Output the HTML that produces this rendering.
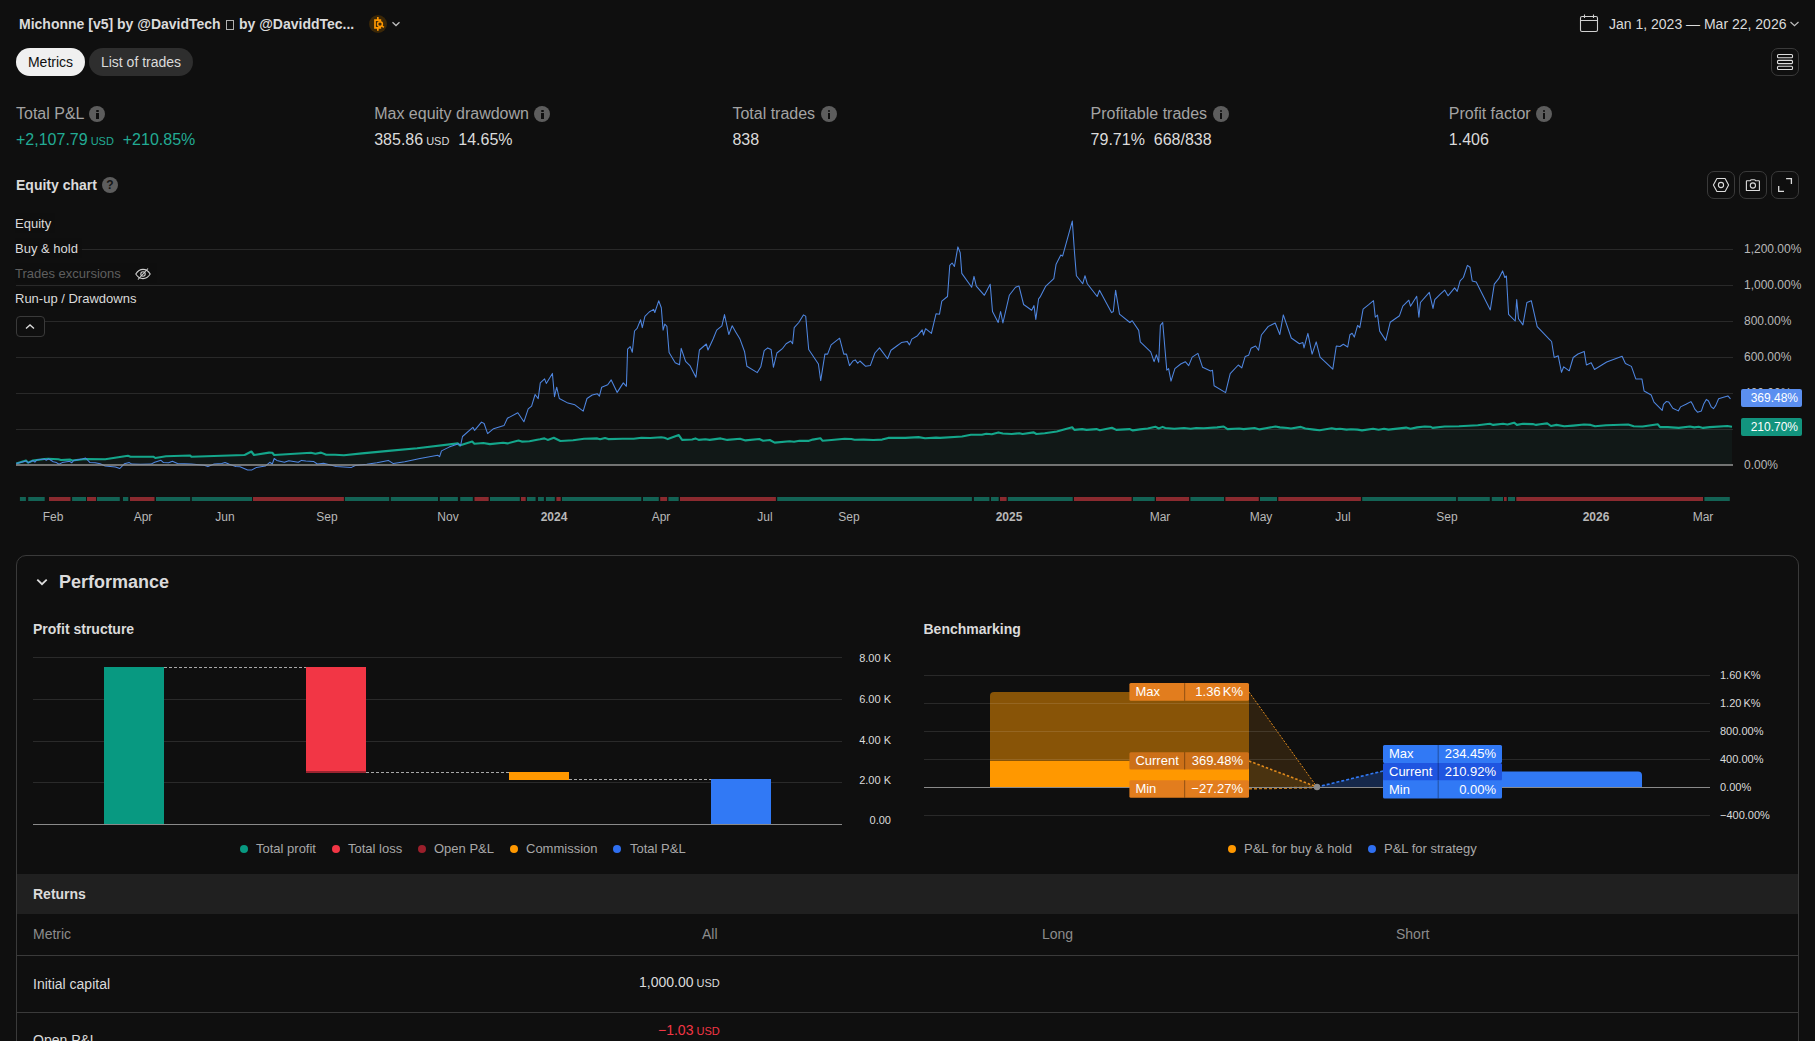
<!DOCTYPE html>
<html><head><meta charset="utf-8">
<style>
*{box-sizing:border-box;margin:0;padding:0}
html,body{width:1815px;height:1041px;overflow:hidden;background:#0f0f0f;font-family:"Liberation Sans",sans-serif;color:#dbdbdb}
.a{position:absolute;white-space:nowrap}
.title{left:19px;top:16px;font-size:14px;font-weight:bold;color:#dbdbdb}
.pill{height:28px;border-radius:14px;font-size:14px;line-height:28px;text-align:center}
.ml{font-size:16px;color:#a3a3a3}
.mv{font-size:16px;color:#dbdbdb}
.usd{font-size:11px;margin-left:3px}
.info{display:inline-block;width:16px;height:16px;border-radius:50%;background:#5d5d5d;vertical-align:-3px;position:relative;margin-left:1px}
.info:before{content:"";position:absolute;left:7px;top:3.5px;width:2.2px;height:2.2px;background:#0f0f0f;border-radius:1px}
.info:after{content:"";position:absolute;left:7px;top:7px;width:2.2px;height:5.5px;background:#0f0f0f}
.ibtn{width:28px;height:28px;border:1px solid #3a3a3a;border-radius:7px}
.leg{font-size:13px;color:#dbdbdb;background:rgba(15,15,15,0.88);padding:3px 4px 4px 0;height:20px}
.xl{font-size:12px;color:#b8b8b8;top:510px;transform:translateX(-50%)}
.yl{font-size:12px;color:#b8b8b8;left:1744px}
.card{left:16px;top:555px;width:1783px;height:600px;border:1px solid #3a3a3a;border-radius:10px}
.h2{font-size:14px;font-weight:bold;color:#dbdbdb}
.lg{font-size:13px;color:#a8a8a8;top:841px}
.dot{width:8px;height:8px;border-radius:50%;top:845px}
.pl{font-size:11px;color:#dbdbdb;text-align:right}
.bt{font-size:13px;color:#fff;height:17.5px;line-height:18px;padding-left:6px}
.th{font-size:14px;color:#8c8c8c;top:926px}
</style></head><body>

<!-- header -->
<div class="a title">Michonne [v5] by @DavidTech <span style="display:inline-block;width:7.5px;height:9.5px;border:1px solid #b0b0b0;vertical-align:-0.5px;margin:0 1.5px 0 1.5px"></span> by @DaviddTec...</div>
<svg class="a" style="left:369px;top:15px" width="36" height="18" viewBox="0 0 36 18"><circle cx="9" cy="9" r="9" fill="#3a2708"/><path d="M12.2 5.1H6V12.8H12.2M8.85 2.1V5.1M8.85 12.8V15.8" stroke="#ff9800" stroke-width="1.7" fill="none"/><circle cx="11" cy="9.1" r="2.4" fill="#3a2708" stroke="#ff9800" stroke-width="1.5"/><path d="M12.9 10.9l1.9 1.5" stroke="#ff9800" stroke-width="1.6"/><path d="M23.5 7.3l3.5 3.2 3.5-3.2" stroke="#bdbdbd" stroke-width="1.3" fill="none"/></svg>

<div class="a pill" style="left:16px;top:48px;width:69px;background:#f0f0f0;color:#0f0f0f">Metrics</div>
<div class="a pill" style="left:89px;top:48px;width:104px;background:#2e2e2e;color:#dbdbdb">List of trades</div>

<svg class="a" style="left:1579px;top:13px" width="20" height="20" viewBox="0 0 20 20"><rect x="1.5" y="3.5" width="17" height="15" rx="1.5" fill="none" stroke="#d0d0d0" stroke-width="1.1"/><path d="M1.5 7.5h17M5.5 1.5v3.5M14.5 1.5v3.5" stroke="#d0d0d0" stroke-width="1.1"/></svg>
<div class="a" style="left:1609px;top:16px;font-size:14px;color:#dbdbdb">Jan 1, 2023 — Mar 22, 2026</div>
<svg class="a" style="left:1789px;top:19px" width="11" height="10" viewBox="0 0 11 10"><path d="M1.5 3l4 3.7 4-3.7" stroke="#bdbdbd" stroke-width="1.2" fill="none"/></svg>

<div class="a ibtn" style="left:1771px;top:48px"></div>
<svg class="a" style="left:1771px;top:48px" width="28" height="28" viewBox="0 0 28 28"><rect x="6.5" y="6.5" width="15" height="3.2" rx="1" fill="none" stroke="#dcdcdc" stroke-width="1.1"/><rect x="6.5" y="12.4" width="15" height="3.2" rx="1" fill="none" stroke="#dcdcdc" stroke-width="1.1"/><rect x="6.5" y="18.3" width="15" height="3.2" rx="1" fill="none" stroke="#dcdcdc" stroke-width="1.1"/></svg>

<!-- metrics -->
<div class="a ml" style="left:16px;top:105px">Total P&amp;L <span class="info"></span></div>
<div class="a mv" style="left:16px;top:131px;color:#22ab94">+2,107.79<span class="usd">USD</span>&nbsp;&nbsp;+210.85%</div>
<div class="a ml" style="left:374.2px;top:105px">Max equity drawdown <span class="info"></span></div>
<div class="a mv" style="left:374.2px;top:131px">385.86<span class="usd">USD</span>&nbsp;&nbsp;14.65%</div>
<div class="a ml" style="left:732.4px;top:105px">Total trades <span class="info"></span></div>
<div class="a mv" style="left:732.4px;top:131px">838</div>
<div class="a ml" style="left:1090.6px;top:105px">Profitable trades <span class="info"></span></div>
<div class="a mv" style="left:1090.6px;top:131px">79.71%&nbsp;&nbsp;668/838</div>
<div class="a ml" style="left:1448.8px;top:105px">Profit factor <span class="info"></span></div>
<div class="a mv" style="left:1448.8px;top:131px">1.406</div>

<div class="a" style="left:16px;top:177px;font-size:14px;font-weight:bold">Equity chart</div>
<div class="a" style="left:102px;top:177px;width:16px;height:16px;border-radius:50%;background:#5d5d5d;color:#151515;font-size:12px;font-weight:bold;text-align:center;line-height:16px">?</div>

<div class="a ibtn" style="left:1707px;top:171px"></div>
<div class="a ibtn" style="left:1739px;top:171px"></div>
<div class="a ibtn" style="left:1771px;top:171px"></div>
<svg class="a" style="left:1707px;top:171px" width="92" height="28" viewBox="0 0 92 28">
<path d="M9.9 7.5h8.2L21.6 14l-3.5 6.5H9.9L6.4 14z" fill="none" stroke="#dcdcdc" stroke-width="1.1" stroke-linejoin="round"/><circle cx="14" cy="14" r="2.6" fill="none" stroke="#dcdcdc" stroke-width="1.1"/>
<path d="M39.4 10.2a0.5 0.5 0 0 1 .5-.5h3.3c.3-.6.9-.9 1.5-.9h2.4c.6 0 1.2.3 1.5.9h3.3a0.5 0.5 0 0 1 .5.5v9.3H39.4z" fill="none" stroke="#dcdcdc" stroke-width="1.1" stroke-linejoin="round"/><circle cx="45.9" cy="14.5" r="2.6" fill="none" stroke="#dcdcdc" stroke-width="1.1"/>
<path d="M79.1 7.7h5.3v5.3M71.7 15v5.3H77" fill="none" stroke="#dcdcdc" stroke-width="1.3"/>
</svg>

<svg class="a" style="left:0;top:0" width="1815" height="540" viewBox="0 0 1815 540">
<polygon points="16.3,465.0 16.3,463.4 26.0,460.5 28.0,462.6 33.0,460.5 44.4,459.0 48.2,458.8 58.4,459.3 60.9,460.0 69.8,459.6 72.3,460.5 85.0,459.0 105.2,459.3 128.0,455.8 130.5,456.7 153.4,456.7 155.3,458.0 166.0,456.2 190.2,455.5 191.4,456.7 244.0,455.0 245.1,454.7 251.4,451.5 254.0,455.0 269.1,452.6 272.3,452.8 274.2,455.0 311.0,452.8 315.4,453.8 321.1,452.6 326.2,454.7 335.0,454.7 343.9,455.3 362.0,453.4 388.5,450.9 417.1,448.2 457.9,443.4 459.6,445.4 472.2,441.6 474.4,443.8 483.3,443.0 489.9,444.1 503.1,442.7 507.5,443.4 518.5,440.5 521.8,441.6 529.5,441.2 537.2,439.7 540.0,439.3 544.4,438.4 547.7,439.9 553.8,437.7 560.4,441.0 573.1,440.2 584.1,438.8 597.3,438.4 600.1,439.3 605.0,438.0 608.3,439.1 622.6,438.8 633.7,438.8 641.4,437.7 650.2,438.0 661.2,437.3 664.5,437.7 667.8,439.1 678.8,435.1 682.1,439.9 692.1,439.5 695.4,438.4 698.7,439.9 705.3,439.3 709.7,439.9 720.7,438.4 727.3,439.9 740.0,438.7 745.5,440.4 759.3,439.0 763.1,440.7 769.8,440.0 774.7,442.6 789.6,441.2 794.0,441.8 799.5,440.7 808.3,440.9 812.7,439.6 820.4,438.2 822.4,440.7 831.5,440.0 844.7,438.7 851.3,439.0 854.6,439.8 863.4,439.6 873.3,440.0 882.1,439.6 888.2,437.9 905.3,437.9 918.5,437.1 925.1,438.2 936.1,437.6 940.0,437.9 962.0,436.5 970.9,434.8 981.9,434.8 986.3,433.7 991.8,434.3 998.4,432.4 1002.8,433.5 1011.6,434.0 1019.3,433.2 1022.6,434.0 1033.7,432.4 1036.4,434.0 1044.7,433.2 1056.8,431.5 1066.7,428.8 1072.2,427.3 1074.4,429.9 1082.1,429.1 1086.6,429.9 1096.5,429.1 1099.8,430.2 1111.9,427.7 1116.3,429.9 1129.5,429.1 1132.8,430.4 1140.0,429.4 1147.7,428.5 1155.4,426.7 1158.7,428.5 1162.6,426.9 1165.3,428.0 1174.2,428.7 1184.1,428.0 1190.7,428.7 1196.2,428.0 1203.9,428.3 1217.1,427.4 1223.7,426.5 1227.6,429.1 1239.2,428.5 1243.6,429.1 1254.6,428.0 1259.6,429.4 1265.6,428.3 1275.5,426.5 1279.9,427.4 1287.7,428.0 1291.0,428.5 1300.9,426.9 1305.3,428.5 1314.1,429.6 1319.6,430.2 1331.7,428.3 1336.1,429.1 1340.0,428.7 1346.6,429.6 1351.0,429.3 1357.6,429.6 1362.0,430.4 1373.1,428.7 1378.6,429.8 1384.1,428.7 1388.5,429.6 1406.1,427.6 1410.5,428.7 1417.1,427.4 1424.8,426.5 1430.4,426.7 1432.6,427.9 1444.7,426.5 1459.0,426.3 1477.7,425.2 1489.9,423.8 1493.2,424.9 1503.1,423.8 1507.5,424.5 1514.1,422.7 1516.9,424.9 1522.9,423.8 1532.8,424.1 1536.1,424.9 1540.0,424.3 1547.2,423.4 1551.0,426.0 1556.5,424.9 1564.2,426.3 1573.1,425.6 1584.1,424.5 1590.7,424.9 1595.1,426.3 1606.1,425.2 1628.2,424.5 1633.7,426.3 1642.5,426.5 1657.9,424.3 1660.1,427.1 1667.8,427.1 1678.8,427.9 1689.9,426.5 1694.3,427.4 1698.7,426.7 1703.1,427.9 1709.7,427.1 1727.3,426.0 1732.0,426.7 1732.0,465.0" fill="#111817"/>
<line x1="16" y1="249.5" x2="1733" y2="249.5" stroke="#ffffff" stroke-opacity="0.11" stroke-width="1"/>
<line x1="16" y1="285.5" x2="1733" y2="285.5" stroke="#ffffff" stroke-opacity="0.11" stroke-width="1"/>
<line x1="16" y1="321.5" x2="1733" y2="321.5" stroke="#ffffff" stroke-opacity="0.11" stroke-width="1"/>
<line x1="16" y1="357.5" x2="1733" y2="357.5" stroke="#ffffff" stroke-opacity="0.11" stroke-width="1"/>
<line x1="16" y1="393.5" x2="1733" y2="393.5" stroke="#ffffff" stroke-opacity="0.11" stroke-width="1"/>
<line x1="16" y1="429.5" x2="1733" y2="429.5" stroke="#ffffff" stroke-opacity="0.11" stroke-width="1"/>
<polyline points="16.3,463.4 26.0,460.5 28.0,462.6 33.0,460.5 44.4,459.0 48.2,458.8 58.4,459.3 60.9,460.0 69.8,459.6 72.3,460.5 85.0,459.0 105.2,459.3 128.0,455.8 130.5,456.7 153.4,456.7 155.3,458.0 166.0,456.2 190.2,455.5 191.4,456.7 244.0,455.0 245.1,454.7 251.4,451.5 254.0,455.0 269.1,452.6 272.3,452.8 274.2,455.0 311.0,452.8 315.4,453.8 321.1,452.6 326.2,454.7 335.0,454.7 343.9,455.3 362.0,453.4 388.5,450.9 417.1,448.2 457.9,443.4 459.6,445.4 472.2,441.6 474.4,443.8 483.3,443.0 489.9,444.1 503.1,442.7 507.5,443.4 518.5,440.5 521.8,441.6 529.5,441.2 537.2,439.7 540.0,439.3 544.4,438.4 547.7,439.9 553.8,437.7 560.4,441.0 573.1,440.2 584.1,438.8 597.3,438.4 600.1,439.3 605.0,438.0 608.3,439.1 622.6,438.8 633.7,438.8 641.4,437.7 650.2,438.0 661.2,437.3 664.5,437.7 667.8,439.1 678.8,435.1 682.1,439.9 692.1,439.5 695.4,438.4 698.7,439.9 705.3,439.3 709.7,439.9 720.7,438.4 727.3,439.9 740.0,438.7 745.5,440.4 759.3,439.0 763.1,440.7 769.8,440.0 774.7,442.6 789.6,441.2 794.0,441.8 799.5,440.7 808.3,440.9 812.7,439.6 820.4,438.2 822.4,440.7 831.5,440.0 844.7,438.7 851.3,439.0 854.6,439.8 863.4,439.6 873.3,440.0 882.1,439.6 888.2,437.9 905.3,437.9 918.5,437.1 925.1,438.2 936.1,437.6 940.0,437.9 962.0,436.5 970.9,434.8 981.9,434.8 986.3,433.7 991.8,434.3 998.4,432.4 1002.8,433.5 1011.6,434.0 1019.3,433.2 1022.6,434.0 1033.7,432.4 1036.4,434.0 1044.7,433.2 1056.8,431.5 1066.7,428.8 1072.2,427.3 1074.4,429.9 1082.1,429.1 1086.6,429.9 1096.5,429.1 1099.8,430.2 1111.9,427.7 1116.3,429.9 1129.5,429.1 1132.8,430.4 1140.0,429.4 1147.7,428.5 1155.4,426.7 1158.7,428.5 1162.6,426.9 1165.3,428.0 1174.2,428.7 1184.1,428.0 1190.7,428.7 1196.2,428.0 1203.9,428.3 1217.1,427.4 1223.7,426.5 1227.6,429.1 1239.2,428.5 1243.6,429.1 1254.6,428.0 1259.6,429.4 1265.6,428.3 1275.5,426.5 1279.9,427.4 1287.7,428.0 1291.0,428.5 1300.9,426.9 1305.3,428.5 1314.1,429.6 1319.6,430.2 1331.7,428.3 1336.1,429.1 1340.0,428.7 1346.6,429.6 1351.0,429.3 1357.6,429.6 1362.0,430.4 1373.1,428.7 1378.6,429.8 1384.1,428.7 1388.5,429.6 1406.1,427.6 1410.5,428.7 1417.1,427.4 1424.8,426.5 1430.4,426.7 1432.6,427.9 1444.7,426.5 1459.0,426.3 1477.7,425.2 1489.9,423.8 1493.2,424.9 1503.1,423.8 1507.5,424.5 1514.1,422.7 1516.9,424.9 1522.9,423.8 1532.8,424.1 1536.1,424.9 1540.0,424.3 1547.2,423.4 1551.0,426.0 1556.5,424.9 1564.2,426.3 1573.1,425.6 1584.1,424.5 1590.7,424.9 1595.1,426.3 1606.1,425.2 1628.2,424.5 1633.7,426.3 1642.5,426.5 1657.9,424.3 1660.1,427.1 1667.8,427.1 1678.8,427.9 1689.9,426.5 1694.3,427.4 1698.7,426.7 1703.1,427.9 1709.7,427.1 1727.3,426.0 1732.0,426.7" fill="none" stroke="#14a68b" stroke-width="2.1" stroke-linejoin="round"/>
<polyline points="16.3,463.4 26.0,460.9 28.6,462.8 33.0,460.5 34.9,462.2 36.8,460.0 44.4,459.0 46.3,460.3 48.5,458.8 53.3,461.8 56.5,462.6 59.0,464.3 62.2,462.6 69.8,461.3 71.7,462.8 73.6,460.5 82.4,459.0 85.6,458.0 90.0,462.6 95.1,462.8 100.2,463.8 105.2,466.0 115.4,466.9 119.8,468.5 124.3,463.8 129.3,462.6 131.9,464.1 140.7,464.3 150.9,464.1 154.7,462.2 161.0,460.3 163.5,462.6 168.6,462.8 172.4,461.3 177.5,463.4 191.4,464.1 204.1,465.3 207.9,466.6 214.2,464.1 221.8,463.4 225.0,462.6 229.4,464.3 235.8,466.6 240.0,466.8 247.6,469.9 252.0,469.9 256.5,467.4 265.3,466.1 269.8,462.3 272.3,464.0 274.2,458.5 276.8,460.4 284.4,462.3 288.8,460.7 298.3,462.3 301.5,460.4 305.9,461.0 313.5,461.4 317.3,464.0 323.6,463.2 336.3,466.5 351.5,467.4 355.3,465.5 366.7,464.2 376.9,462.7 388.3,460.4 393.3,463.6 404.7,461.7 420.0,458.5 437.7,455.3 439.6,456.6 441.5,450.9 449.1,447.1 458.6,443.7 460.5,445.8 462.5,436.5 472.9,427.3 474.6,430.4 481.5,422.1 484.1,423.5 487.6,433.6 493.6,428.7 504.0,425.6 507.4,418.3 517.8,412.8 523.9,421.8 528.2,408.8 531.6,406.2 535.1,394.5 538.2,398.6 540.3,382.9 544.6,378.9 546.3,383.4 552.4,373.4 554.5,396.7 556.7,387.2 559.3,398.5 568.0,403.1 574.9,404.8 583.2,411.1 587.0,398.5 592.2,395.0 597.4,393.8 599.4,396.2 601.7,387.2 607.7,384.8 611.2,379.9 617.2,392.4 623.3,382.9 626.4,386.3 627.6,349.2 630.2,346.6 632.3,352.3 634.5,331.0 637.1,328.4 640.6,319.8 642.3,327.6 644.9,316.3 649.2,312.0 653.6,309.4 654.8,312.5 658.7,300.8 661.3,307.7 663.1,330.1 664.8,324.1 666.9,326.3 669.1,352.6 675.2,362.7 679.5,364.7 681.2,348.3 685.6,361.3 689.9,365.6 695.9,377.2 699.4,350.0 706.3,344.0 708.0,350.0 713.2,338.8 716.7,330.1 721.9,325.8 724.5,314.6 728.8,334.5 732.2,325.8 735.7,331.9 740.0,339.1 744.6,351.8 746.9,366.3 757.3,372.6 760.8,366.8 764.2,350.7 767.7,347.9 771.1,349.5 773.4,367.3 776.9,353.0 782.7,348.3 786.1,343.7 790.7,341.0 792.6,343.7 794.2,327.6 798.8,322.5 803.4,314.9 805.7,316.1 808.7,349.5 818.4,364.0 820.7,380.6 824.9,354.1 827.6,354.1 831.1,344.9 839.6,338.2 843.8,354.1 846.5,354.1 849.5,365.6 853.0,361.0 855.3,359.9 857.6,363.3 859.9,361.0 865.7,366.3 870.3,365.6 874.9,353.0 879.5,347.9 887.6,358.7 891.0,350.2 896.8,346.0 901.4,342.6 907.2,341.4 909.5,344.9 911.8,339.1 917.5,335.7 922.2,329.9 923.5,335.0 925.6,328.7 931.4,333.4 936.0,313.8 939.5,314.2 941.8,301.1 947.5,296.5 949.8,265.3 952.1,263.0 954.4,266.5 957.9,246.9 960.2,252.7 961.8,273.4 971.7,287.2 974.0,276.4 976.3,286.1 984.4,295.3 990.2,284.2 992.5,311.5 998.2,322.5 1000.6,311.5 1002.9,323.0 1009.3,295.3 1015.5,287.2 1019.0,286.1 1023.6,304.5 1031.7,310.3 1034.0,305.6 1035.8,319.5 1038.6,298.8 1040.0,297.2 1045.8,286.1 1053.8,278.7 1056.1,264.2 1060.8,255.0 1062.6,256.1 1072.3,221.1 1074.6,253.8 1076.4,275.7 1082.7,283.8 1085.0,275.7 1087.3,283.8 1097.2,296.5 1099.5,290.2 1111.5,312.6 1113.3,311.5 1115.6,290.2 1119.5,314.2 1129.9,322.5 1132.2,320.7 1138.7,330.4 1140.3,341.9 1150.7,351.8 1154.1,361.7 1156.4,354.8 1158.7,362.2 1160.4,325.3 1162.7,322.5 1166.8,370.2 1168.6,368.6 1171.0,381.1 1174.9,368.6 1180.7,364.0 1185.3,361.7 1188.7,365.6 1192.2,357.1 1197.9,353.4 1202.6,367.3 1210.6,370.9 1212.5,370.2 1214.1,385.7 1225.6,392.6 1230.2,373.7 1238.3,365.0 1241.8,367.9 1245.2,356.4 1248.6,355.3 1251.0,348.3 1255.6,346.0 1258.6,350.2 1261.4,335.0 1268.3,326.4 1275.2,323.0 1279.8,334.5 1283.3,314.9 1291.3,338.0 1299.4,343.7 1302.9,342.6 1304.0,347.9 1307.9,333.4 1312.1,354.1 1316.2,341.9 1320.1,357.1 1332.8,369.1 1336.3,346.0 1340.0,346.5 1343.3,344.3 1347.7,347.0 1349.9,334.8 1352.1,333.3 1354.3,337.1 1357.6,325.4 1359.8,327.6 1363.1,309.1 1368.7,304.7 1373.5,300.7 1375.3,317.2 1377.5,315.0 1379.7,331.1 1385.8,340.4 1390.2,322.3 1399.5,315.7 1402.8,306.2 1408.8,300.2 1410.5,306.2 1416.7,296.3 1418.9,317.2 1420.4,302.5 1429.3,292.3 1433.0,308.4 1434.8,299.6 1440.3,294.1 1444.7,290.1 1448.0,295.8 1454.6,287.9 1457.2,291.4 1460.1,280.9 1463.4,277.5 1467.4,265.4 1470.0,267.2 1472.2,280.9 1476.2,282.0 1490.3,309.9 1494.3,284.2 1498.7,278.7 1502.6,270.9 1504.8,277.5 1506.4,276.0 1508.6,314.4 1515.2,321.0 1516.7,299.6 1518.5,318.8 1522.9,324.9 1526.9,302.5 1531.3,300.7 1537.2,326.7 1549.4,339.3 1551.6,341.5 1554.2,357.5 1558.2,355.8 1561.5,372.3 1563.7,366.8 1569.2,370.8 1573.2,357.5 1578.0,354.0 1584.2,351.4 1586.4,365.0 1591.2,362.8 1594.5,369.5 1606.7,362.0 1622.1,356.2 1625.4,363.5 1631.4,366.4 1635.8,378.9 1641.9,378.9 1644.1,391.0 1651.2,395.0 1654.0,402.1 1662.2,410.4 1663.5,404.3 1666.2,401.6 1668.8,402.1 1672.8,408.2 1678.3,410.9 1680.5,406.9 1686.0,404.3 1690.9,401.6 1692.6,404.3 1694.8,409.1 1697.5,412.2 1701.4,410.9 1703.6,404.3 1706.3,399.4 1708.5,401.0 1711.3,406.9 1713.5,408.7 1715.8,405.4 1718.6,398.8 1723.5,397.2 1727.9,395.9 1730.5,398.8" fill="none" stroke="#4f86e0" stroke-width="1.05" stroke-linejoin="round"/>
<line x1="16" y1="465" x2="1733" y2="465" stroke="#959595" stroke-width="1.7"/>
</svg>
<svg class="a" style="left:0;top:490px" width="1815" height="12">
<rect x="19.9" y="7" width="6.0" height="4" fill="#136355"/>
<rect x="28.2" y="7" width="16.5" height="4" fill="#136355"/>
<rect x="49.0" y="7" width="21.5" height="4" fill="#8b2a2f"/>
<rect x="72.1" y="7" width="13.9" height="4" fill="#136355"/>
<rect x="87.0" y="7" width="9.0" height="4" fill="#8b2a2f"/>
<rect x="96.9" y="7" width="22.9" height="4" fill="#136355"/>
<rect x="123.0" y="7" width="5.3" height="4" fill="#136355"/>
<rect x="130.0" y="7" width="24.5" height="4" fill="#8b2a2f"/>
<rect x="156.0" y="7" width="34.2" height="4" fill="#136355"/>
<rect x="191.8" y="7" width="60.2" height="4" fill="#136355"/>
<rect x="253.0" y="7" width="90.9" height="4" fill="#8b2a2f"/>
<rect x="344.9" y="7" width="44.3" height="4" fill="#136355"/>
<rect x="390.8" y="7" width="47.2" height="4" fill="#136355"/>
<rect x="439.8" y="7" width="18.1" height="4" fill="#136355"/>
<rect x="460.2" y="7" width="12.6" height="4" fill="#136355"/>
<rect x="474.5" y="7" width="14.2" height="4" fill="#8b2a2f"/>
<rect x="490.0" y="7" width="29.8" height="4" fill="#136355"/>
<rect x="521.0" y="7" width="4.7" height="4" fill="#8b2a2f"/>
<rect x="527.0" y="7" width="8.6" height="4" fill="#136355"/>
<rect x="538.0" y="7" width="5.9" height="4" fill="#136355"/>
<rect x="545.9" y="7" width="8.9" height="4" fill="#136355"/>
<rect x="556.4" y="7" width="4.3" height="4" fill="#8b2a2f"/>
<rect x="562.0" y="7" width="79.3" height="4" fill="#136355"/>
<rect x="643.0" y="7" width="15.8" height="4" fill="#136355"/>
<rect x="660.2" y="7" width="6.9" height="4" fill="#8b2a2f"/>
<rect x="668.4" y="7" width="10.3" height="4" fill="#136355"/>
<rect x="680.0" y="7" width="95.9" height="4" fill="#8b2a2f"/>
<rect x="777.2" y="7" width="194.7" height="4" fill="#136355"/>
<rect x="973.9" y="7" width="15.5" height="4" fill="#136355"/>
<rect x="991.0" y="7" width="7.7" height="4" fill="#136355"/>
<rect x="1000.0" y="7" width="6.6" height="4" fill="#8b2a2f"/>
<rect x="1007.9" y="7" width="64.8" height="4" fill="#136355"/>
<rect x="1074.0" y="7" width="57.6" height="4" fill="#8b2a2f"/>
<rect x="1132.9" y="7" width="21.8" height="4" fill="#136355"/>
<rect x="1156.0" y="7" width="33.1" height="4" fill="#8b2a2f"/>
<rect x="1190.4" y="7" width="33.6" height="4" fill="#136355"/>
<rect x="1225.4" y="7" width="33.4" height="4" fill="#8b2a2f"/>
<rect x="1260.0" y="7" width="17.0" height="4" fill="#136355"/>
<rect x="1278.3" y="7" width="82.6" height="4" fill="#8b2a2f"/>
<rect x="1362.2" y="7" width="93.9" height="4" fill="#136355"/>
<rect x="1457.8" y="7" width="32.0" height="4" fill="#136355"/>
<rect x="1491.8" y="7" width="11.2" height="4" fill="#136355"/>
<rect x="1504.0" y="7" width="2.7" height="4" fill="#8b2a2f"/>
<rect x="1508.0" y="7" width="7.0" height="4" fill="#136355"/>
<rect x="1516.3" y="7" width="186.7" height="4" fill="#8b2a2f"/>
<rect x="1704.4" y="7" width="25.4" height="4" fill="#136355"/>
</svg>

<!-- legend -->
<div class="a leg" style="left:15px;top:213px">Equity</div>
<div class="a leg" style="left:15px;top:238px">Buy &amp; hold</div>
<div class="a leg" style="left:15px;top:263px;color:#5f5f5f;width:142px">Trades excursions</div>
<svg class="a" style="left:134px;top:265px" width="18" height="18" viewBox="0 0 18 18"><path d="M1.8 9c2-3.2 4.4-4.6 7.2-4.6s5.2 1.4 7.2 4.6c-2 3.2-4.4 4.6-7.2 4.6S3.8 12.2 1.8 9z" fill="none" stroke="#cfcfcf" stroke-width="1.1"/><circle cx="9" cy="9" r="2.2" fill="none" stroke="#cfcfcf" stroke-width="1.1"/><path d="M4 14.5L14 3.5" stroke="#cfcfcf" stroke-width="1.1"/></svg>
<div class="a leg" style="left:15px;top:288px">Run-up / Drawdowns</div>
<div class="a" style="left:16px;top:316px;width:29px;height:21px;border:1px solid #3a3a3a;border-radius:4px;background:#0f0f0f"></div>
<svg class="a" style="left:15px;top:316px" width="30" height="21" viewBox="0 0 30 21"><path d="M11 12.5l4-3.6 4 3.6" stroke="#dcdcdc" stroke-width="1.3" fill="none"/></svg>

<!-- y labels -->
<div class="a yl" style="top:242px">1,200.00%</div>
<div class="a yl" style="top:278px">1,000.00%</div>
<div class="a yl" style="top:314px">800.00%</div>
<div class="a yl" style="top:350px">600.00%</div>
<div class="a yl" style="top:386px">400.00%</div>
<div class="a yl" style="top:458px">0.00%</div>
<div class="a" style="left:1741px;top:389px;width:61px;height:18px;border-radius:2px;background:#5b8ff0;color:#fff;font-size:12px;line-height:18px;text-align:right;padding-right:4px">369.48%</div>
<div class="a" style="left:1741px;top:418px;width:61px;height:18px;border-radius:2px;background:#12947e;color:#fff;font-size:12px;line-height:18px;text-align:right;padding-right:4px">210.70%</div>

<!-- x labels -->
<div class="a xl" style="left:53px">Feb</div>
<div class="a xl" style="left:143px">Apr</div>
<div class="a xl" style="left:225px">Jun</div>
<div class="a xl" style="left:327px">Sep</div>
<div class="a xl" style="left:448px">Nov</div>
<div class="a xl" style="left:554px;font-weight:bold">2024</div>
<div class="a xl" style="left:661px">Apr</div>
<div class="a xl" style="left:765px">Jul</div>
<div class="a xl" style="left:849px">Sep</div>
<div class="a xl" style="left:1009px;font-weight:bold">2025</div>
<div class="a xl" style="left:1160px">Mar</div>
<div class="a xl" style="left:1261px">May</div>
<div class="a xl" style="left:1343px">Jul</div>
<div class="a xl" style="left:1447px">Sep</div>
<div class="a xl" style="left:1596px;font-weight:bold">2026</div>
<div class="a xl" style="left:1703px">Mar</div>

<!-- card -->
<div class="a card"></div>
<svg class="a" style="left:34px;top:575px" width="16" height="14" viewBox="0 0 16 14"><path d="M3.3 4.6l4.7 4.6 4.7-4.6" stroke="#dcdcdc" stroke-width="1.8" fill="none"/></svg>
<div class="a" style="left:59px;top:572px;font-size:18px;font-weight:bold">Performance</div>
<div class="a h2" style="left:33px;top:621px">Profit structure</div>
<div class="a h2" style="left:923.5px;top:621px">Benchmarking</div>

<svg class="a" style="left:0;top:640px" width="1815" height="230" viewBox="0 640 1815 230">
<line x1="33" y1="657.5" x2="842" y2="657.5" stroke="#2a2a2a" stroke-width="1"/>
<line x1="33" y1="699.5" x2="842" y2="699.5" stroke="#2a2a2a" stroke-width="1"/>
<line x1="33" y1="741.5" x2="842" y2="741.5" stroke="#2a2a2a" stroke-width="1"/>
<line x1="33" y1="782.5" x2="842" y2="782.5" stroke="#2a2a2a" stroke-width="1"/>
<line x1="33" y1="824.5" x2="842" y2="824.5" stroke="#8a8a8a" stroke-width="1"/>
<rect x="104" y="667" width="60" height="157" fill="#089981"/>
<rect x="306" y="667" width="60" height="105.5" fill="#f23645"/>
<rect x="306" y="771" width="60" height="2" fill="#9b2430"/>
<rect x="509" y="772" width="60" height="8" fill="#ff9800"/>
<rect x="711" y="779" width="60" height="45" fill="#3179f5"/>
<line x1="164" y1="667.5" x2="306" y2="667.5" stroke="#a8a8a8" stroke-width="1" stroke-dasharray="3 2"/>
<line x1="366" y1="772.5" x2="509" y2="772.5" stroke="#a8a8a8" stroke-width="1" stroke-dasharray="3 2"/>
<line x1="569" y1="779.5" x2="711" y2="779.5" stroke="#a8a8a8" stroke-width="1" stroke-dasharray="3 2"/>
<path d="M990 696a4 4 0 0 1 4-4H1249V788H990z" fill="#885407"/>
<rect x="990" y="761" width="259" height="27" fill="#ff9800"/>
<polygon points="1249,692 1317,787 1249,788" fill="#2e2110"/>
<polygon points="1249,761 1317,787 1249,788" fill="#4a3310"/>
<line x1="1249" y1="692" x2="1317" y2="787" stroke="#e08a1c" stroke-width="1" stroke-dasharray="2 1.5"/>
<line x1="1249" y1="761" x2="1317" y2="787" stroke="#e08a1c" stroke-width="1.6" stroke-dasharray="2.5 2"/>
<line x1="1249" y1="788.5" x2="1317" y2="787.5" stroke="#c07818" stroke-width="2" stroke-dasharray="3 2"/>
<path d="M1383 771.5H1638a4 4 0 0 1 4 4V788H1383z" fill="#3179f5"/>
<polygon points="1317,787 1383,771 1383,788" fill="#16284a"/>
<line x1="1317" y1="787" x2="1383" y2="771" stroke="#3179f5" stroke-width="1.6" stroke-dasharray="3 2"/>
<line x1="1317" y1="787.5" x2="1383" y2="787.5" stroke="#3179f5" stroke-width="1.2" stroke-dasharray="3 2"/>
<line x1="924" y1="675.5" x2="1710" y2="675.5" stroke="#ffffff" stroke-opacity="0.11" stroke-width="1"/>
<line x1="924" y1="703.5" x2="1710" y2="703.5" stroke="#ffffff" stroke-opacity="0.11" stroke-width="1"/>
<line x1="924" y1="731.5" x2="1710" y2="731.5" stroke="#ffffff" stroke-opacity="0.11" stroke-width="1"/>
<line x1="924" y1="759.5" x2="1710" y2="759.5" stroke="#ffffff" stroke-opacity="0.11" stroke-width="1"/>
<line x1="924" y1="815.5" x2="1710" y2="815.5" stroke="#ffffff" stroke-opacity="0.11" stroke-width="1"/>
<line x1="924" y1="787.5" x2="1710" y2="787.5" stroke="#8a8a8a" stroke-width="1"/>
<circle cx="1317" cy="787" r="3.2" fill="#8a8a8a"/>
<rect x="1129.4" y="683.1" width="119.59999999999991" height="17.699999999999932" rx="1.5" fill="#e27d1e"/>
<rect x="1184" y="683.1" width="1.2" height="17.699999999999932" fill="#000" fill-opacity="0.3"/>
<text x="1135.4" y="696.2" fill="#fff" font-size="13">Max</text>
<text x="1243" y="696.2" fill="#fff" font-size="13" text-anchor="end">1.36<tspan dx="-1.5"> </tspan>K%</text>
<rect x="1129.4" y="752.2" width="119.59999999999991" height="17.299999999999955" rx="1.5" fill="#cc7018"/>
<rect x="1184" y="752.2" width="1.2" height="17.299999999999955" fill="#000" fill-opacity="0.3"/>
<text x="1135.4" y="765.1" fill="#fff" font-size="13">Current</text>
<text x="1243" y="765.1" fill="#fff" font-size="13" text-anchor="end">369.48%</text>
<rect x="1129.4" y="780.2" width="119.59999999999991" height="17.5" rx="1.5" fill="#e27d1e"/>
<rect x="1184" y="780.2" width="1.2" height="17.5" fill="#000" fill-opacity="0.3"/>
<text x="1135.4" y="793.2" fill="#fff" font-size="13">Min</text>
<text x="1243" y="793.2" fill="#fff" font-size="13" text-anchor="end">−27.27%</text>
<rect x="1383" y="745" width="119" height="18" rx="1.5" fill="#3179f5"/>
<rect x="1437.6" y="745" width="1.2" height="18" fill="#000" fill-opacity="0.3"/>
<text x="1389" y="758.2" fill="#fff" font-size="13">Max</text>
<text x="1496" y="758.2" fill="#fff" font-size="13" text-anchor="end">234.45%</text>
<rect x="1383" y="763" width="119" height="17.5" rx="1.5" fill="#1f55e0"/>
<rect x="1437.6" y="763" width="1.2" height="17.5" fill="#000" fill-opacity="0.3"/>
<text x="1389" y="776.0" fill="#fff" font-size="13">Current</text>
<text x="1496" y="776.0" fill="#fff" font-size="13" text-anchor="end">210.92%</text>
<rect x="1383" y="780.5" width="119" height="17.899999999999977" rx="1.5" fill="#3179f5"/>
<rect x="1437.6" y="780.5" width="1.2" height="17.899999999999977" fill="#000" fill-opacity="0.3"/>
<text x="1389" y="793.7" fill="#fff" font-size="13">Min</text>
<text x="1496" y="793.7" fill="#fff" font-size="13" text-anchor="end">0.00%</text>
</svg>
<div class="a pl" style="left:791px;width:100px;top:652px">8.00 K</div>
<div class="a pl" style="left:791px;width:100px;top:693px">6.00 K</div>
<div class="a pl" style="left:791px;width:100px;top:733.5px">4.00 K</div>
<div class="a pl" style="left:791px;width:100px;top:774px">2.00 K</div>
<div class="a pl" style="left:791px;width:100px;top:814px">0.00</div>
<div class="a" style="left:1720px;top:669px;font-size:11px;color:#dbdbdb">1.60<span style="letter-spacing:-1px"> </span>K%</div>
<div class="a" style="left:1720px;top:697px;font-size:11px;color:#dbdbdb">1.20<span style="letter-spacing:-1px"> </span>K%</div>
<div class="a" style="left:1720px;top:725px;font-size:11px;color:#dbdbdb">800.00%</div>
<div class="a" style="left:1720px;top:753px;font-size:11px;color:#dbdbdb">400.00%</div>
<div class="a" style="left:1720px;top:781px;font-size:11px;color:#dbdbdb">0.00%</div>
<div class="a" style="left:1720px;top:809px;font-size:11px;color:#dbdbdb">−400.00%</div>
<div class="a dot" style="left:240px;background:#089981"></div>
<div class="a lg" style="left:256px">Total profit</div>
<div class="a dot" style="left:332px;background:#f23645"></div>
<div class="a lg" style="left:348px">Total loss</div>
<div class="a dot" style="left:418px;background:#9b1f2b"></div>
<div class="a lg" style="left:434px">Open P&amp;L</div>
<div class="a dot" style="left:510px;background:#ff9800"></div>
<div class="a lg" style="left:526px">Commission</div>
<div class="a dot" style="left:613px;background:#2f6ff0"></div>
<div class="a lg" style="left:630px">Total P&amp;L</div>
<div class="a dot" style="left:1228px;background:#ff9800"></div>
<div class="a lg" style="left:1244px">P&amp;L for buy &amp; hold</div>
<div class="a dot" style="left:1368px;background:#2f6ff0"></div>
<div class="a lg" style="left:1384px">P&amp;L for strategy</div>

<div class="a" style="left:17px;top:874px;width:1781px;height:40px;background:#202020"></div>
<div class="a h2" style="left:33px;top:886px">Returns</div>
<div class="a th" style="left:33px">Metric</div>
<div class="a th" style="left:702px">All</div>
<div class="a th" style="left:1042px">Long</div>
<div class="a th" style="left:1396px">Short</div>
<div class="a" style="left:17px;top:955px;width:1781px;height:1px;background:#3a3a3a"></div>
<div class="a" style="left:33px;top:976px;font-size:14px">Initial capital</div>
<div class="a" style="left:639px;top:974px;font-size:14px">1,000.00<span class="usd">USD</span></div>
<div class="a" style="left:17px;top:1012px;width:1781px;height:1px;background:#3a3a3a"></div>
<div class="a" style="left:33px;top:1032px;font-size:14px">Open P&amp;L</div>
<div class="a" style="left:658px;top:1022px;font-size:14px;color:#f23645">−1.03<span class="usd">USD</span></div>

</body></html>
